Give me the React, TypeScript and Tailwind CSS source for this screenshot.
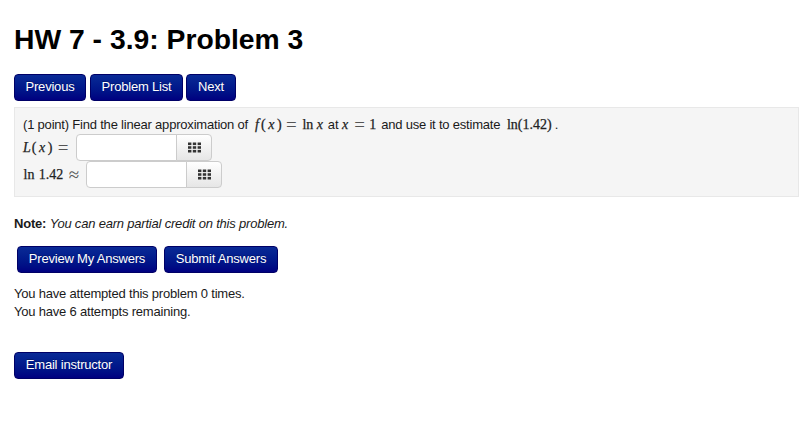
function NavButton({ label, className = '' }: { label: string; className?: string }) {
  return (
    <button
      className={`h-[27px] rounded-[4px] border border-[#000066] bg-gradient-to-b from-[#0a2a96] to-[#000080] pb-[2px] text-center text-[13px] leading-[20px] tracking-[-0.2px] text-white [text-shadow:0_-1px_0_rgba(0,0,0,0.25)] ${className}`}
    >
      {label}
    </button>
  )
}

function Grid() {
  return (
    <svg width="13" height="11" viewBox="0 0 13 11" fill="#333">
      <rect x="0" y="0.5" width="3.4" height="2.6" />
      <rect x="4.8" y="0.5" width="3.4" height="2.6" />
      <rect x="9.6" y="0.5" width="3.4" height="2.6" />
      <rect x="0" y="4.2" width="3.4" height="2.6" />
      <rect x="4.8" y="4.2" width="3.4" height="2.6" />
      <rect x="9.6" y="4.2" width="3.4" height="2.6" />
      <rect x="0" y="7.9" width="3.4" height="2.6" />
      <rect x="4.8" y="7.9" width="3.4" height="2.6" />
      <rect x="9.6" y="7.9" width="3.4" height="2.6" />
    </svg>
  )
}

function AnswerBox() {
  return (
    <span className="inline-flex h-[27px]">
      <span className="h-[27px] w-[101px] rounded-l-[4px] border border-[#cccccc] bg-white" />
      <span className="-ml-px flex h-[27px] w-[36px] items-center justify-center rounded-r-[4px] border border-[#cccccc] bg-gradient-to-b from-white to-[#e6e6e6]">
        <Grid />
      </span>
    </span>
  )
}

// math tokens have set widths so they land where the typeset formula has them
function M({ children, i = false, className = '' }: { children: React.ReactNode; i?: boolean; className?: string }) {
  return (
    <span
      className={`inline-block text-center font-[Liberation_Serif,serif] text-[14px] tracking-normal text-[#222] [-webkit-text-stroke:0.25px_#222] ${i ? 'italic' : ''} ${className}`}
    >
      {children}
    </span>
  )
}

// relation signs are drawn wider and thinner than the letters
function Rel({ children, className = '' }: { children: React.ReactNode; className?: string }) {
  return (
    <span className={`inline-block translate-y-[2px] text-center font-[Liberation_Serif,serif] text-[19px] leading-[0] tracking-normal text-[#555] ${className}`}>
      {children}
    </span>
  )
}

export default function App() {
  return (
    <div className="h-[428px] w-[799px] overflow-hidden bg-white font-[Liberation_Sans,Arial,sans-serif] text-[13px] leading-[20px] tracking-[-0.2px] text-[#1a1a1a]">
      <div className="pl-[14px] pt-[21px]">
        <h1 className="h-[36px] text-[28.3px] font-bold leading-[36px] tracking-normal text-black">HW 7 - 3.9: Problem 3</h1>
        <div className="mt-[17px] flex gap-[4px]">
          <NavButton label="Previous" className="w-[72px]" />
          <NavButton label="Problem List" className="-mr-px w-[93px]" />
          <NavButton label="Next" className="w-[50px]" />
        </div>
        <div className="mt-[6px] h-[90px] border border-[#e8e8e8] bg-[#f5f5f5] pl-[8px] pt-[7px]">
          <div className="h-[19px] whitespace-nowrap">
            (1 point) Find the linear approximation of{' '}
            <M i className="ml-[2px] w-[7px]">f</M>
            <M className="w-[6px]">(</M>
            <M i className="w-[10px]">x</M>
            <M className="w-[6px]">)</M>
            <Rel className="ml-[3px] w-[12px]">=</Rel>
            <M className="ml-[4px] w-[13px]">ln</M>
            <M i className="ml-[1px] w-[9px]">x</M> at{' '}
            <M i className="-ml-px w-[9px]">x</M>
            <Rel className="ml-[3px] w-[14px]">=</Rel>
            <M className="ml-[2px] mr-[1px] w-[8px]">1</M> and use it to estimate{' '}
            <M className="w-[51px] tracking-[0.5px]">ln(1.42)</M>.
          </div>
          <div className="flex h-[27px] items-center">
            <span className="w-[53px] whitespace-nowrap">
              <M i className="w-[8px]">L</M>
              <M className="w-[6px]">(</M>
              <M i className="w-[10px]">x</M>
              <M className="w-[6px]">)</M>
              <Rel className="ml-[4px] w-[12px]">=</Rel>
            </span>
            <AnswerBox />
          </div>
          <div className="flex h-[27px] items-center">
            <span className="w-[63px] whitespace-nowrap">
              <M className="w-[12px]">ln</M>
              <M className="ml-[3px] w-[26px]">1.42</M>
              <Rel className="ml-[4px] w-[12px]">≈</Rel>
            </span>
            <AnswerBox />
          </div>
        </div>
        <p className="mt-[17px] h-[20px]">
          <b>Note:</b> <i>You can earn partial credit on this problem.</i>
        </p>
        <div className="ml-[3px] mt-[12px] flex gap-[7px]">
          <NavButton label="Preview My Answers" className="w-[140px]" />
          <NavButton label="Submit Answers" className="w-[114px]" />
        </div>
        <p className="mt-[11px]">You have attempted this problem 0 times.</p>
        <p className="-mt-[2px]">You have 6 attempts remaining.</p>
        <NavButton label="Email instructor" className="mt-[30px] w-[110px]" />
      </div>
    </div>
  )
}
